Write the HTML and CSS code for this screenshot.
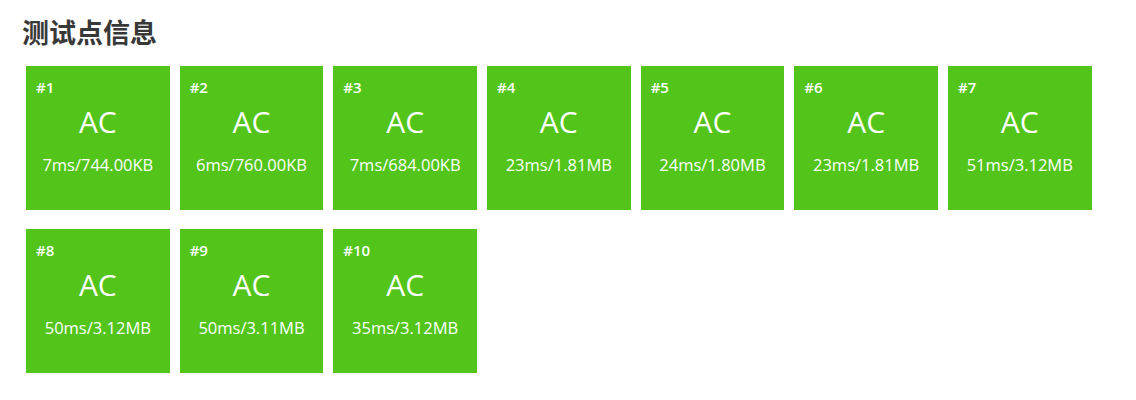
FILE: index.html
```html
<!DOCTYPE html>
<html lang="zh">
<head>
<meta charset="utf-8">
<link rel="stylesheet" href="styles.css">
</head>
<body>
<div class="page">
  <h2 class="title">测试点信息</h2>
  <div class="grid">
    <div class="tile"><div class="num">#1</div><div class="status">AC</div><div class="stat">7ms/744.00KB</div></div>
    <div class="tile"><div class="num">#2</div><div class="status">AC</div><div class="stat">6ms/760.00KB</div></div>
    <div class="tile"><div class="num">#3</div><div class="status">AC</div><div class="stat">7ms/684.00KB</div></div>
    <div class="tile"><div class="num">#4</div><div class="status">AC</div><div class="stat">23ms/1.81MB</div></div>
    <div class="tile"><div class="num">#5</div><div class="status">AC</div><div class="stat">24ms/1.80MB</div></div>
    <div class="tile"><div class="num">#6</div><div class="status">AC</div><div class="stat">23ms/1.81MB</div></div>
    <div class="tile"><div class="num">#7</div><div class="status">AC</div><div class="stat">51ms/3.12MB</div></div>
    <div class="tile"><div class="num">#8</div><div class="status">AC</div><div class="stat">50ms/3.12MB</div></div>
    <div class="tile"><div class="num">#9</div><div class="status">AC</div><div class="stat">50ms/3.11MB</div></div>
    <div class="tile"><div class="num">#10</div><div class="status">AC</div><div class="stat">35ms/3.12MB</div></div>
  </div>
</div>
</body>
</html>
```
FILE: styles.css
```css
html, body {
  margin: 0;
  padding: 0;
  background: #fff;
}
.page {
  padding: 16px 26px 0 26px;
  font-family: "Open Sans", "Noto Sans CJK SC", sans-serif;
}
.title {
  margin: 0 0 18px -4px;
  font-size: 27px;
  line-height: 32px;
  font-weight: bold;
  color: #383838;
  font-family: "Noto Sans CJK SC", sans-serif;
}
.grid {
  display: grid;
  grid-template-columns: repeat(7, 143.67px);
  column-gap: 10px;
  row-gap: 19px;
}
.tile {
  height: 144px;
  background: #52c41a;
  color: #fff;
  box-sizing: border-box;
  padding: 11px 10px 0 10px;
  display: flex;
  flex-direction: column;
}
.num {
  font-size: 15px;
  line-height: 20px;
  font-weight: 600;
}
.status {
  text-align: center;
  font-size: 30px;
  line-height: 38px;
  margin-top: 6px;
}
.stat {
  text-align: center;
  font-size: 16.5px;
  line-height: 20px;
  margin-top: 14px;
}
```
